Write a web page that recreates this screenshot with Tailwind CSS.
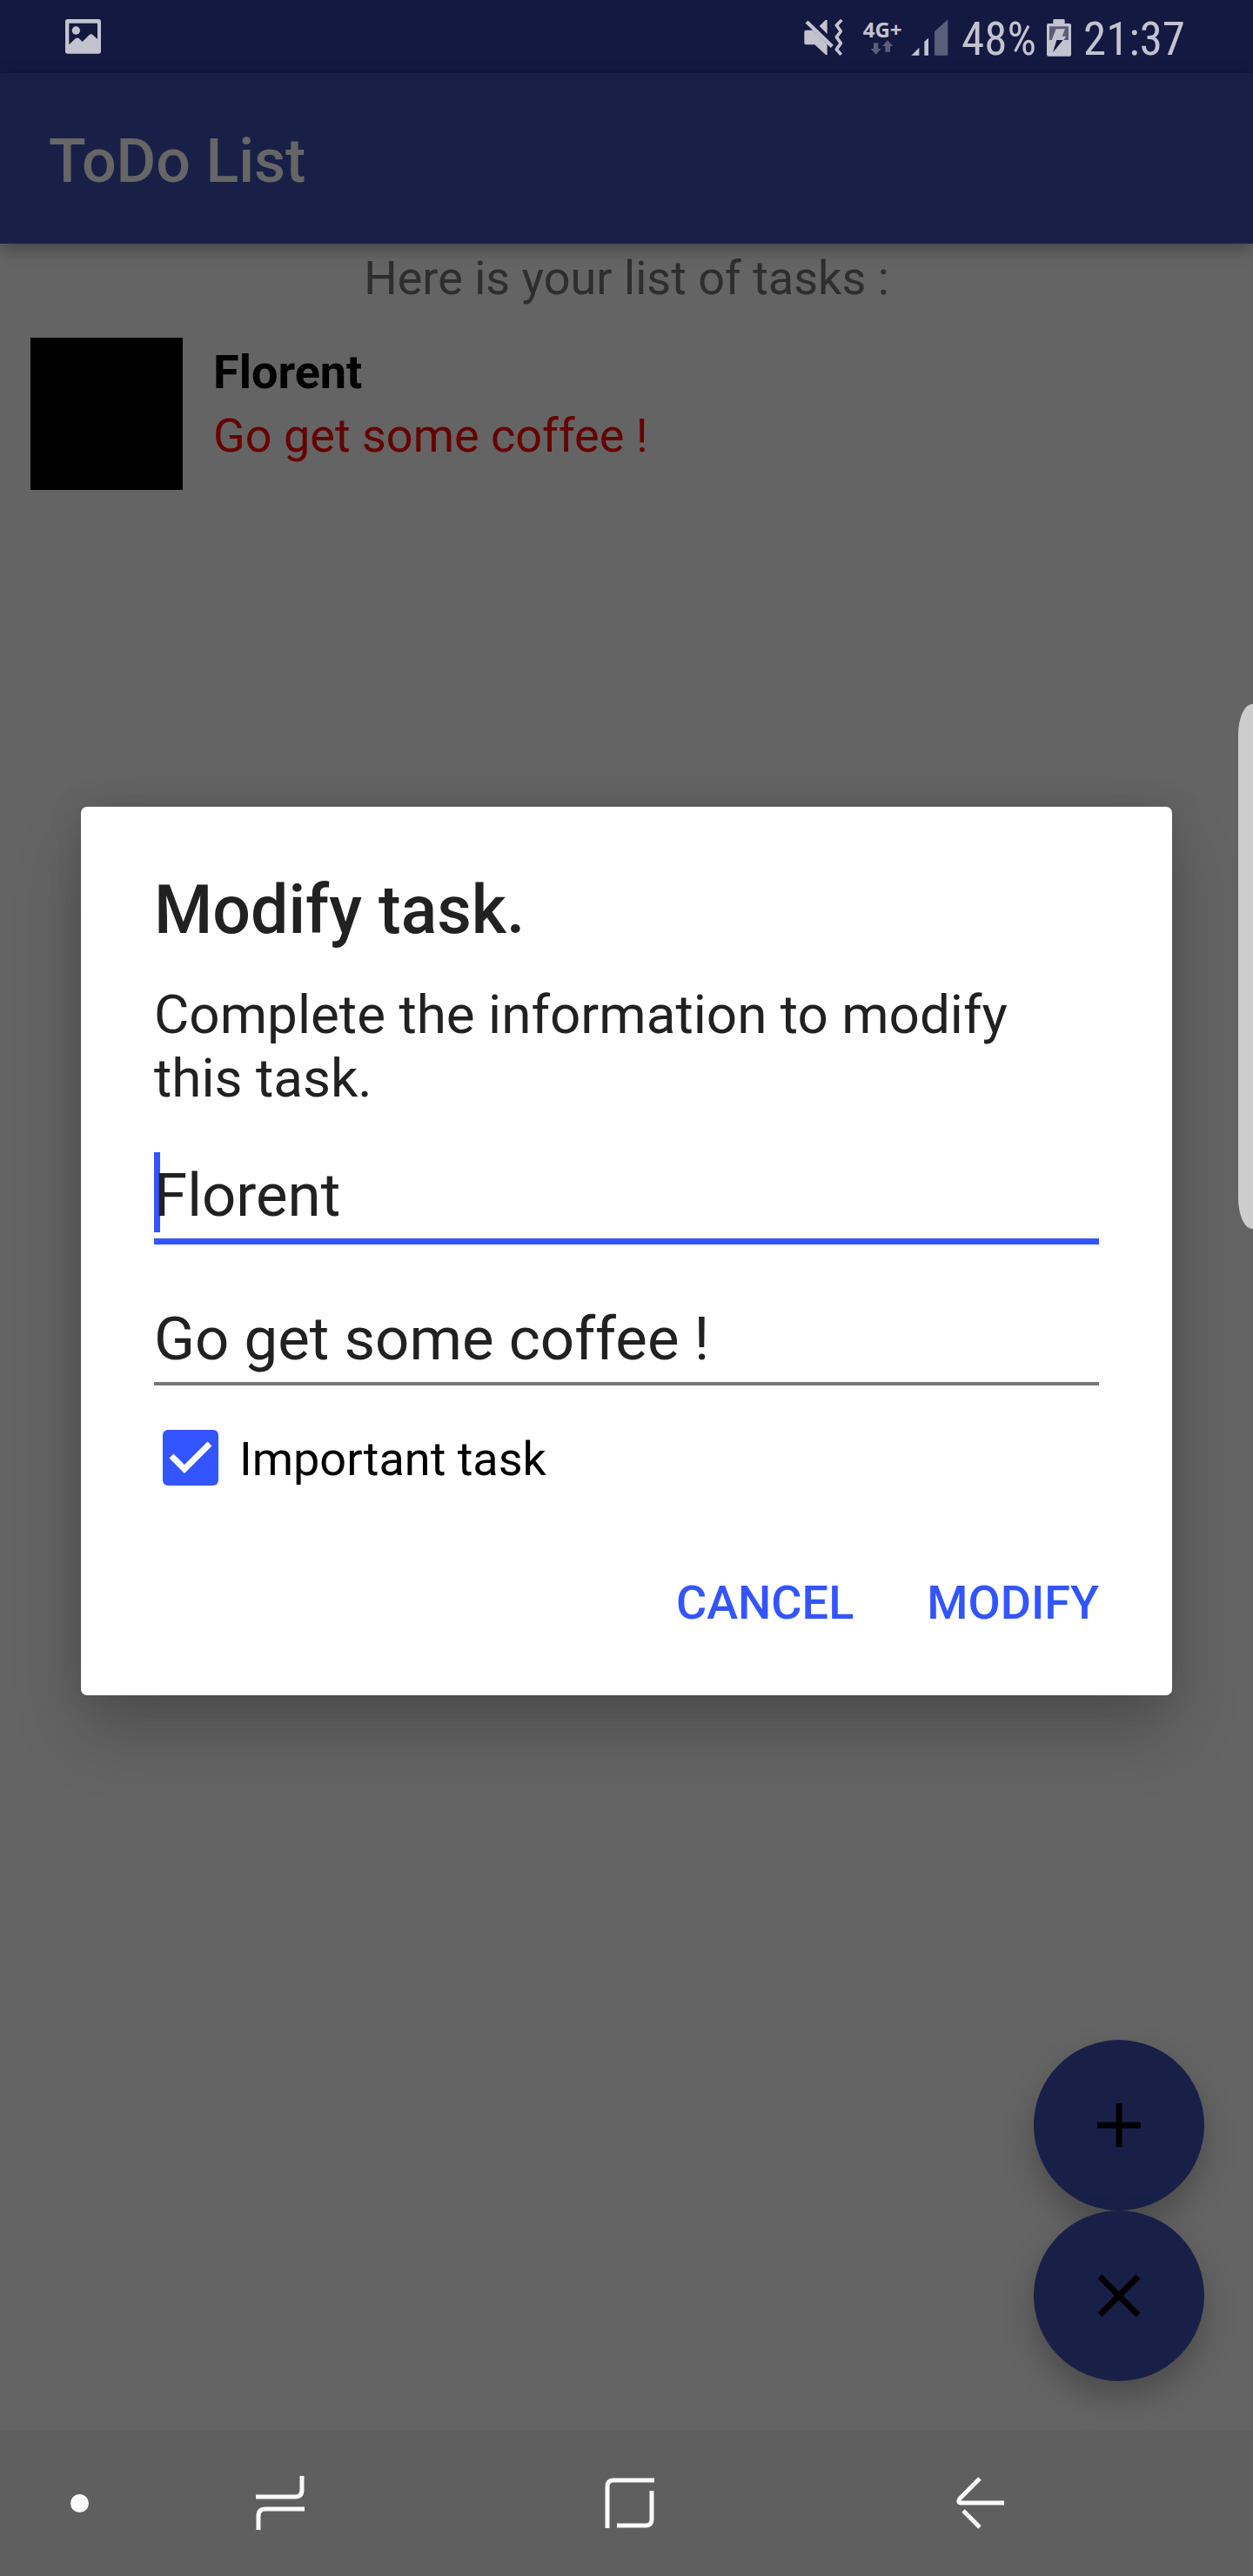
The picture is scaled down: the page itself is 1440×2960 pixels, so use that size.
<!DOCTYPE html>
<html lang="en">
<head>
<meta charset="utf-8">
<meta name="viewport" content="width=device-width, initial-scale=1">
<title>ToDo List</title>
<script src="https://cdn.jsdelivr.net/npm/@tailwindcss/browser@4"></script>
</head>
<body class="bg-[#646464] font-['Roboto',sans-serif]">
<div class="relative flex min-h-screen flex-col overflow-hidden">

  <!-- System status bar -->
  <div class="flex h-[84px] shrink-0 items-center justify-between bg-[#131940] pr-[78px] pl-[75px] text-[#c3c3cf]">
    <svg class="h-10 w-[41px]" viewBox="225 70 123 120" fill="currentColor" aria-label="Picture saved">
      <path fill-rule="evenodd" d="M233 70h107q8 0 8 8v103q0 8-8 8H233q-8 0-8-8V78q0-8 8-8zM238 84v74l22-21q7-5 13 0l11 11 22-22q8-8 16 0l14 13V84z"/>
      <circle cx="262" cy="109" r="14"/>
    </svg>
    <div class="flex items-center pt-0.5">
      <svg class="mr-5 h-[46px] w-12" viewBox="72 62 144 138" aria-label="Muted, vibrate">
        <path fill="currentColor" d="M82 106h24l49 49v36h-5l-38-35H82q-6 0-6-6v-38q0-6 6-6zM128 92l21-21h6v48z"/>
        <path stroke="currentColor" stroke-width="13" d="M84 77l88 85"/>
        <path fill="none" stroke="currentColor" stroke-width="11" stroke-linejoin="round" d="M205 71l-18 18 15 21-15 20 15 21-15 21 16 18"/>
      </svg>
      <div class="mr-2.5 flex w-[46px] flex-col items-center">
        <span class="font-['Open_Sans',sans-serif] text-[24px] leading-[24px] font-bold">4G+</span>
        <svg class="h-[18px] w-7" viewBox="303 142 84 54" fill="#5a5e79" aria-label="Mobile data">
          <path d="M315 152h16v20h10l-18 20-18-20h10zM355 183v-20h-10l18-20 19 20h-10v20z"/>
        </svg>
      </div>
      <svg class="mr-3.5 h-[42px] w-11" viewBox="444 65 132 126" aria-label="Signal strength">
        <path fill="currentColor" d="M445 190l27-27v27zM490 190v-48l14-12v60z"/>
        <path fill="#5a5e79" d="M525 190v-82l46-42v124z"/>
      </svg>
      <span class="pt-[3px] font-['Roboto_Condensed','Roboto',sans-serif] text-[53px] leading-[62px]">48%</span>
      <svg class="mr-3.5 ml-3 h-[43px] w-7" viewBox="912 63 84 129" aria-label="Charging">
        <path fill="currentColor" d="M936 63h34q4 0 4 4v11h16q6 0 6 6v101q0 6-6 6h-72q-6 0-6-6V84q0-6 6-6h16V67q0-4 2-4z"/>
        <path fill="#5a5e79" d="M921 88h66v47h-66z"/>
        <path fill="currentColor" d="M944 97h31l-10 25h14l-10 14h-40z"/>
        <path fill="#15183a" d="M946 135h22l-35 43z"/>
      </svg>
      <span class="pt-[3px] font-['Roboto_Condensed','Roboto',sans-serif] text-[53px] leading-[62px]">21:37</span>
    </div>
  </div>

  <!-- App bar -->
  <header class="relative flex h-[196px] shrink-0 items-center bg-[#192048] px-14 pt-1.5 shadow-[0_6px_18px_rgba(0,0,0,0.3)]">
    <h1 class="text-[70px] leading-[82px] font-medium text-[#666666]">ToDo List</h1>
  </header>

  <!-- Task list -->
  <main class="flex-1 px-[35px]">
    <p class="pt-[3px] text-center text-[54px] leading-[74px] text-[#2e2e2e]">Here is your list of tasks :</p>
    <ul class="pt-[31px]">
      <li class="flex gap-[35px]">
        <div class="size-[175px] shrink-0 bg-black"></div>
        <div class="pt-[3px] text-[54px] leading-[73px]">
          <h2 class="font-bold text-black">Florent</h2>
          <p class="text-[#660000]">Go get some coffee !</p>
        </div>
      </li>
    </ul>
  </main>

  <!-- Floating actions -->
  <div class="flex flex-col items-end px-14 pb-14">
    <button type="button" aria-label="Add task" class="flex size-[196px] items-center justify-center rounded-full bg-[#192048] shadow-[0_18px_36px_rgba(0,0,0,0.25)]">
      <svg class="size-[50px]" viewBox="0 0 50 50" fill="none" stroke="#000" stroke-width="7"><path d="M25 0v50M0 25h50"/></svg>
    </button>
    <button type="button" aria-label="Delete tasks" class="relative flex size-[196px] items-center justify-center rounded-full bg-[#192048] shadow-[0_18px_36px_rgba(0,0,0,0.25)]">
      <svg class="size-[50px]" viewBox="0 0 50 50" fill="none" stroke="#000" stroke-width="7"><path d="M3 3l44 44M47 3L3 47"/></svg>
    </button>
  </div>

  <!-- System navigation bar -->
  <nav class="flex h-[168px] shrink-0 items-center bg-[#5f5f5f] pl-[81px] text-[#fafafa]">
    <button type="button" aria-label="Hide navigation bar" class="w-[15.7%]"><span class="block size-[21px] rounded-full bg-[#fafafa]"></span></button>
    <button type="button" aria-label="Recent apps" class="w-[29.5%]">
      <svg class="h-[62px] w-14" viewBox="0 0 56 62" fill="none" stroke="currentColor" stroke-width="5"><path d="M0 24h45q8 0 8-8V0M56 38H11q-8 0-8 8v16"/></svg>
    </button>
    <button type="button" aria-label="Home" class="w-[29.7%]">
      <svg class="h-[58px] w-[57px]" viewBox="0 0 57 58" fill="none" stroke="currentColor" stroke-width="5"><path d="M57 3H10q-7 0-7 7v48M54 15v33q0 7-7 7H14"/></svg>
    </button>
    <button type="button" aria-label="Back">
      <svg class="h-[62px] w-14" viewBox="0 0 56 62" fill="none" stroke="currentColor" stroke-width="5"><path d="M27 3L4 26q-3 5 2 5h49M8 40l19 19"/></svg>
    </button>
  </nav>

  <!-- Edge panel handle -->
  <div class="absolute top-[809px] right-0 h-[603px] w-[17px] rounded-l-[16px_36px] bg-[#cdcdcd]"></div>

  <!-- Modify dialog -->
  <div class="absolute inset-0 flex items-center px-[93px] pt-[83px] pb-[168px]">
    <form role="dialog" aria-labelledby="dialog-title" class="w-full rounded-[7px] bg-white px-[84px] pt-[74px] pb-[73px] text-[#212121] shadow-[0_44px_80px_rgba(0,0,0,0.2),0_0_40px_rgba(0,0,0,0.12)]">
      <h2 id="dialog-title" class="text-[77px] leading-[90px] font-medium">Modify task.</h2>
      <p class="mt-[38px] text-[62px] leading-[73px]">Complete the information to modify this task.</p>
      <div class="relative mt-[49px]">
        <span class="absolute top-0 left-0 h-[92px] w-[7px] bg-[#3355ff]"></span>
        <input type="text" aria-label="Name" value="Florent" class="relative block h-[106px] w-full border-b-[7px] border-[#3355ff] text-[69px] outline-none">
      </div>
      <input type="text" aria-label="Task" value="Go get some coffee !" class="mt-[59px] block h-[103px] w-full border-b-4 border-[#777777] text-[69px] outline-none">
      <div class="mt-[50px] flex items-center pl-2.5">
        <div class="relative size-16">
          <input id="important" type="checkbox" checked class="block size-16 appearance-none rounded-md checked:bg-[#3355ff]">
          <svg class="pointer-events-none absolute inset-0 size-16" viewBox="0 0 64 64" fill="none" stroke="#fff" stroke-width="7"><path d="M10 30l15 15 29-29"/></svg>
        </div>
        <label for="important" class="pt-1 pl-6 text-[54px] leading-[62px] text-black">Important task</label>
      </div>
      <div class="mt-[101px] flex justify-end gap-[84px] text-[54px] leading-[66px] font-medium text-[#3355ff]">
        <button type="button">CANCEL</button>
        <button type="submit">MODIFY</button>
      </div>
    </form>
  </div>
</div>
</body>
</html>
